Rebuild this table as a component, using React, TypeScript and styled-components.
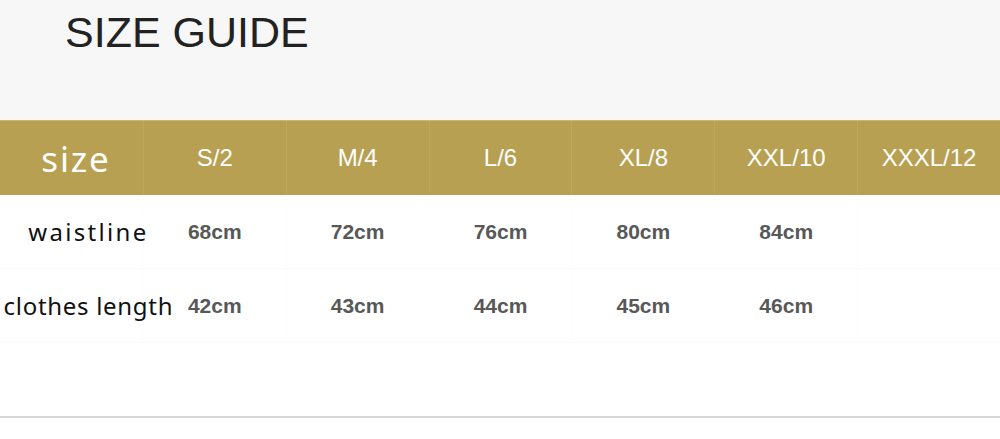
import styled, { createGlobalStyle } from 'styled-components';

const GlobalStyle = createGlobalStyle`
  html, body {
    margin: 0;
    padding: 0;
    background: #ffffff;
  }
`;

const Page = styled.div`
  width: 1000px;
  height: 439px;
  background: #ffffff;
  overflow: hidden;
`;

const TitleBar = styled.header`
  height: 120px;
  background: #f7f7f7;
  padding: 11px 0 0 65px;
  box-sizing: border-box;
`;

const Title = styled.h1`
  margin: 0;
  font-family: 'Liberation Sans', Arial, sans-serif;
  font-weight: 400;
  font-size: 43px;
  line-height: 43px;
  color: #222222;
`;

const Row = styled.div<{ head?: boolean }>`
  display: grid;
  grid-template-columns: repeat(7, minmax(0, 1fr));
  height: ${({ head }) => (head ? '75px' : '74px')};
  background: ${({ head }) => (head ? '#b8a052' : '#ffffff')};
  border-top: ${({ head }) => (head ? '1px solid #c9b77c' : 'none')};
  border-bottom: ${({ head }) => (head ? 'none' : '1px solid #fbfbfb')};
  box-sizing: border-box;
`;

const Cell = styled.div<{ head?: boolean }>`
  display: flex;
  align-items: center;
  justify-content: center;
  white-space: nowrap;
  border-left: 1px solid ${({ head }) => (head ? '#bda85e' : '#fdfdfd')};
  font-family: 'Liberation Sans', Arial, sans-serif;
  font-size: ${({ head }) => (head ? '24px' : '21px')};
  font-weight: ${({ head }) => (head ? 400 : 700)};
  color: ${({ head }) => (head ? '#ffffff' : '#585858')};
`;

const LabelCell = styled.div<{ head?: boolean; spacing: number }>`
  position: relative;
  z-index: 1;
  display: flex;
  align-items: center;
  justify-content: center;
  white-space: nowrap;
  min-width: 0;
  padding-left: ${({ head }) => (head ? '9px' : '34px')};
  font-family: 'Noto Sans', 'Open Sans', sans-serif;
  font-size: ${({ head }) => (head ? '35px' : '24px')};
  letter-spacing: ${({ spacing }) => spacing}px;
  color: ${({ head }) => (head ? '#ffffff' : '#111111')};
`;

const Spacer = styled.div`
  height: 73px;
  border-bottom: 2px solid #d6d6d6;
`;

const sizes = ['S/2', 'M/4', 'L/6', 'XL/8', 'XXL/10', 'XXXL/12'];

const rows = [
  { label: 'waistline', spacing: 2.3, values: ['68cm', '72cm', '76cm', '80cm', '84cm', ''] },
  { label: 'clothes length', spacing: 0.7, values: ['42cm', '43cm', '44cm', '45cm', '46cm', ''] },
];

const App = () => {
  return (
    <Page>
      <GlobalStyle />
      <TitleBar>
        <Title>SIZE GUIDE</Title>
      </TitleBar>
      <Row head>
        <LabelCell head spacing={1.8}>
          size
        </LabelCell>
        {sizes.map((s) => (
          <Cell head key={s}>
            {s}
          </Cell>
        ))}
      </Row>
      {rows.map((r) => (
        <Row key={r.label}>
          <LabelCell spacing={r.spacing}>{r.label}</LabelCell>
          {r.values.map((v, i) => (
            <Cell key={i}>{v}</Cell>
          ))}
        </Row>
      ))}
      <Spacer />
    </Page>
  );
};

export default App;
